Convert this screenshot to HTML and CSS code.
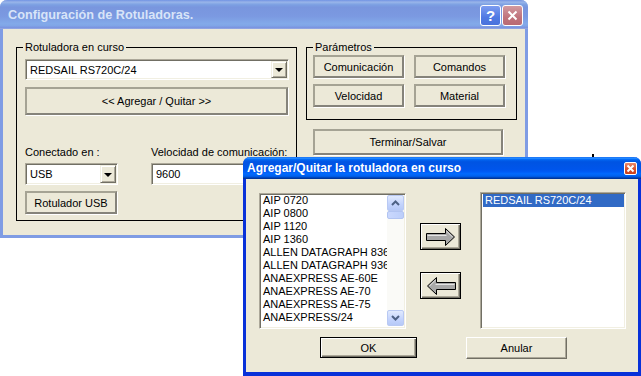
FILE: index.html
```html
<!DOCTYPE html>
<html lang="es">
<head>
  <meta charset="UTF-8" />
  <meta name="viewport" content="width=device-width, initial-scale=1.0"/>
  <title>Configuración de Rotuladoras</title>
  <link rel="stylesheet" href="styles.css">
</head>
<body>

  <!-- Main dialog (inactive) -->
  <div class="win main-win">
    <div class="titlebar">
      <span class="title">Configuración de Rotuladoras.</span>
      <div class="title-buttons">
        <span class="tbtn help">?</span>
        <span class="tbtn close">
          <svg width="11" height="11" viewBox="0 0 11 11"><path d="M1.5 1.5 L9.5 9.5 M9.5 1.5 L1.5 9.5" stroke="#fff" stroke-width="2" fill="none"/></svg>
        </span>
      </div>
    </div>

    <div class="client main-client">
      <fieldset class="group group-rot">
        <legend>Rotuladora en curso</legend>
        <div class="combo combo-wide">
          <span class="combo-text">REDSAIL RS720C/24</span>
          <span class="combo-btn"><span class="tri"></span></span>
        </div>
        <button class="btn btn-wide">&lt;&lt; Agregar / Quitar &gt;&gt;</button>

        <div class="conn-row">
          <div class="conn-col">
            <div class="lbl">Conectado en :</div>
            <div class="combo combo-usb">
              <span class="combo-text">USB</span>
              <span class="combo-btn"><span class="tri"></span></span>
            </div>
            <button class="btn btn-usb">Rotulador USB</button>
          </div>
          <div class="conn-col speed-col">
            <div class="lbl">Velocidad de comunicación:</div>
            <div class="edit">9600</div>
          </div>
        </div>
      </fieldset>

      <div class="right-col">
        <fieldset class="group group-param">
          <legend>Parámetros</legend>
          <div class="param-grid">
            <button class="btn">Comunicación</button>
            <button class="btn">Comandos</button>
            <button class="btn">Velocidad</button>
            <button class="btn">Material</button>
          </div>
        </fieldset>
        <button class="btn btn-save">Terminar/Salvar</button>
      </div>
    </div>
  </div>

  <span class="speck"></span>

  <!-- Add / remove dialog (active) -->
  <div class="win sub-win">
    <div class="titlebar">
      <span class="title">Agregar/Quitar la rotuladora en curso</span>
      <div class="title-buttons">
        <span class="tbtn small-close">
          <svg width="9" height="9" viewBox="0 0 9 9"><path d="M1.5 1.5 L7.5 7.5 M7.5 1.5 L1.5 7.5" stroke="#fff" stroke-width="2" fill="none"/></svg>
        </span>
      </div>
    </div>

    <div class="client sub-client">
      <div class="lists-row">
        <div class="listbox list-all">
          <ul class="items">
            <li>AIP 0720</li>
            <li>AIP 0800</li>
            <li>AIP 1120</li>
            <li>AIP 1360</li>
            <li>ALLEN DATAGRAPH 836</li>
            <li>ALLEN DATAGRAPH 936</li>
            <li>ANAEXPRESS AE-60E</li>
            <li>ANAEXPRESS AE-70</li>
            <li>ANAEXPRESS AE-75</li>
            <li>ANAEXPRESS/24</li>
            <li>ANAGRAPH EXPRESS 12</li>
          </ul>
          <div class="vscroll">
            <span class="sb-btn">
              <svg width="9" height="6" viewBox="0 0 9 6"><path d="M1 5 L4.5 1.5 L8 5" stroke="#4d6185" stroke-width="2" fill="none"/></svg>
            </span>
            <span class="sb-thumb"></span>
            <span class="sb-track"></span>
            <span class="sb-btn">
              <svg width="9" height="6" viewBox="0 0 9 6"><path d="M1 1 L4.5 4.5 L8 1" stroke="#4d6185" stroke-width="2" fill="none"/></svg>
            </span>
          </div>
        </div>

        <div class="arrow-col">
          <button class="btn-def arrow-btn">
            <svg width="30" height="20" viewBox="0 0 30 20">
              <path d="M0.5 6.5 H19.5 V1.5 L28.5 10 L19.5 18.5 V13.5 H0.5 Z" fill="#a8a8a8" stroke="#000"/>
              <path d="M1.5 8.5 H20.5 M20.5 4 L26.5 10" stroke="#e4e4e4" fill="none"/>
            </svg>
          </button>
          <button class="btn-def arrow-btn">
            <svg width="30" height="20" viewBox="0 0 30 20">
              <path d="M29.5 6.5 H10.5 V1.5 L1.5 10 L10.5 18.5 V13.5 H29.5 Z" fill="#a8a8a8" stroke="#000"/>
              <path d="M28.5 8.5 H9.5 M9.5 4 L3.5 10" stroke="#e4e4e4" fill="none"/>
            </svg>
          </button>
        </div>

        <div class="listbox list-sel">
          <ul class="items">
            <li class="selected">REDSAIL RS720C/24</li>
          </ul>
        </div>
      </div>

      <div class="btn-row">
        <button class="btn-def btn-ok">OK</button>
        <button class="btn-plain btn-cancel">Anular</button>
      </div>
    </div>
  </div>

</body>
</html>
```

FILE: styles.css
```css
* {
  box-sizing: border-box;
}

body {
  margin: 0;
  width: 641px;
  height: 376px;
  position: relative;
  overflow: hidden;
  background: #fff;
  font-family: "Liberation Sans", Arial, sans-serif;
  font-size: 11px;
  color: #000;
}

button {
  font: inherit;
  color: #000;
  padding: 0;
  cursor: default;
}

/* Windows */
.win {
  position: absolute;
  display: flex;
  flex-direction: column;
  background: #ece9d8;
  border: 3px solid;
  border-top: 0;
  border-radius: 7px 7px 0 0;
}

.titlebar {
  display: flex;
  align-items: center;
  margin: 0 -3px;
  border-radius: 7px 7px 0 0;
  font-weight: bold;
}

.title {
  flex: 1;
  white-space: nowrap;
}

.title-buttons {
  display: flex;
  gap: 1px;
}

.tbtn {
  display: flex;
  align-items: center;
  justify-content: center;
  border: 1px solid #fff;
  border-radius: 3px;
  color: #fff;
}

/* Main window, inactive look */
.main-win {
  left: 0;
  top: 0;
  width: 528px;
  height: 238px;
  border-color: #7f9ce4;
}

.main-win .titlebar {
  height: 29px;
  padding: 0 5px 0 8px;
  color: #d8e4f8;
  font-size: 12.7px;
  background: linear-gradient(to bottom, #7697e7 0%, #7e9ee3 3%, #94afe8 6%, #97b4e9 8%, #82a5e4 14%, #7c9fe2 17%, #7996de 25%, #7b99e1 56%, #82a9e9 81%, #80a5e7 89%, #7b96e1 94%, #7a93df 97%, #abbae3 100%);
}

.main-win .tbtn {
  width: 21px;
  height: 21px;
  margin-top: 1px;
}

.help {
  background: linear-gradient(to bottom, #7d9cf0, #4f79e3 60%, #4a72dc);
  font-size: 15px;
  font-weight: bold;
}

.close {
  background: linear-gradient(to bottom, #d29aa0, #c0737c 60%, #b96a73);
}

.main-client {
  flex: 1;
  display: flex;
  align-items: flex-start;
  padding: 12px 0 0 13px;
}

/* Group boxes */
.group {
  margin: 0;
  padding: 5px 0 0 8px;
  border: 1px solid #000;
  min-width: 0;
}

.group legend {
  padding: 0 2px;
  margin-left: -2px;
  line-height: 13px;
}

.group-rot {
  width: 281px;
  height: 180px;
}

.right-col {
  margin-left: 9px;
  display: flex;
  flex-direction: column;
}

.group-param {
  width: 211px;
  height: 79px;
  padding: 1px 0 0 6px;
}

.group-param legend {
  margin-left: 0;
}

.param-grid {
  display: grid;
  grid-template-columns: 91px 91px;
  grid-auto-rows: 23px;
  column-gap: 10px;
  row-gap: 6px;
}

/* Buttons */
.btn {
  display: block;
  background: #ece9d8;
  border: 2px solid;
  border-color: #a5a394 #85837a #85837a #a5a394;
  box-shadow: 1px 1px 0 #fff;
}

.btn-wide {
  width: 263px;
  height: 28px;
  margin-top: 7px;
}

.btn-usb {
  width: 92px;
  height: 23px;
  margin-top: 6px;
}

.btn-save {
  width: 190px;
  height: 26px;
  margin: 9px 0 0 7px;
}

.btn-def {
  display: block;
  background: #ece9d8;
  border: 1px solid #000;
  box-shadow: inset 1px 1px 0 #fff, inset -1px -1px 0 #716f64, inset -2px -2px 0 #aca899;
}

.btn-plain {
  display: block;
  background: #ece9d8;
  border: 1px solid;
  border-color: #fff #716f64 #716f64 #fff;
  box-shadow: inset -1px -1px 0 #aca899;
}

/* Combo boxes and edits */
.combo,
.edit {
  display: flex;
  align-items: center;
  background: #fff;
  border: 1px solid;
  border-color: #aca899 #fff #fff #aca899;
  box-shadow: inset 1px 1px 0 #716f64, inset -1px -1px 0 #f1efe2;
  padding: 1px;
}

.combo-text {
  flex: 1;
  padding-left: 3px;
  white-space: nowrap;
}

.combo-btn {
  width: 16px;
  align-self: stretch;
  display: flex;
  align-items: center;
  justify-content: center;
  background: #ece9d8;
  border: 1px solid;
  border-color: #f1efe2 #716f64 #716f64 #f1efe2;
  box-shadow: inset 1px 1px 0 #fff, inset -1px -1px 0 #aca899;
}

.tri {
  width: 0;
  height: 0;
  border-left: 4px solid transparent;
  border-right: 4px solid transparent;
  border-top: 4px solid #000;
  margin-top: 1px;
}

.combo-wide {
  width: 264px;
  height: 21px;
}

.combo-usb {
  width: 93px;
  height: 22px;
  margin-top: 4px;
}

.edit {
  width: 137px;
  height: 22px;
  margin-top: 4px;
  padding-left: 4px;
}

.conn-row {
  display: flex;
  margin-top: 31px;
}

.lbl {
  line-height: 13px;
  white-space: nowrap;
}

.speed-col {
  margin-left: 33px;
}

.speck {
  position: absolute;
  left: 592px;
  top: 154px;
  width: 2px;
  height: 4px;
  background: #000;
}

/* Sub window, active look */
.sub-win {
  left: 243px;
  top: 157px;
  width: 398px;
  height: 219px;
  border-color: #0831d9;
  border-bottom-width: 4px;
}

.sub-win .titlebar {
  height: 22px;
  padding: 0 4px 0 4px;
  color: #fff;
  font-size: 12px;
  background: linear-gradient(to bottom, #0058ee 0%, #3593ff 4%, #288eff 6%, #127dff 8%, #036ffc 10%, #0262ee 14%, #0057e5 20%, #0054e3 24%, #0055eb 56%, #005bf5 66%, #026afe 76%, #0062ef 86%, #0052d6 92%, #0040ab 94%, #003092 100%);
}

.small-close {
  width: 13px;
  height: 13px;
  border-radius: 2px;
  background: linear-gradient(to bottom, #ec8a6c, #d9502c 55%, #c9401c);
}

.sub-client {
  flex: 1;
  padding: 14px 0 0 13px;
}

.lists-row {
  display: flex;
  align-items: flex-start;
}

.listbox {
  display: flex;
  background: #fff;
  border: 1px solid;
  border-color: #aca899 #fff #fff #aca899;
  box-shadow: inset 1px 1px 0 #716f64, inset -1px -1px 0 #f1efe2;
  padding: 0 1px 2px 2px;
  overflow: hidden;
}

.items {
  flex: 1;
  list-style: none;
  margin: 0;
  padding: 0;
  overflow: hidden;
}

.items li {
  line-height: 13px;
  height: 13px;
  padding-left: 1px;
  white-space: nowrap;
}

.items li.selected {
  background: #316ac5;
  color: #fff;
  padding-left: 2px;
}

.list-all {
  width: 147px;
  height: 136px;
}

.list-all .vscroll {
  margin-top: 1px;
}

.list-sel {
  width: 146px;
  height: 137px;
  margin: -1px 0 0 19px;
  padding-top: 1px;
}

.vscroll {
  width: 17px;
  display: flex;
  flex-direction: column;
  background: #fafaf7;
}

.sb-btn {
  height: 16px;
  display: flex;
  align-items: center;
  justify-content: center;
  border: 1px solid #b9c9f3;
  border-radius: 2px;
  background: linear-gradient(to bottom, #e1eafe, #c3d3fd 60%, #b6c9f7);
}

.sb-thumb {
  height: 8px;
  border: 1px solid #b2c4f1;
  border-radius: 2px;
  background: linear-gradient(to right, #cad8fd, #bccefa);
}

.sb-track {
  flex: 1;
}

.arrow-col {
  margin-left: 14px;
  padding-top: 30px;
  display: flex;
  flex-direction: column;
  gap: 22px;
}

.arrow-btn {
  width: 41px;
  height: 27px;
  display: flex;
  align-items: center;
  justify-content: center;
}

.btn-row {
  display: flex;
  align-items: flex-start;
  margin: 8px 0 0 61px;
}

.btn-ok {
  width: 97px;
  height: 21px;
}

.btn-cancel {
  width: 101px;
  height: 22px;
  margin-left: 49px;
}
```
